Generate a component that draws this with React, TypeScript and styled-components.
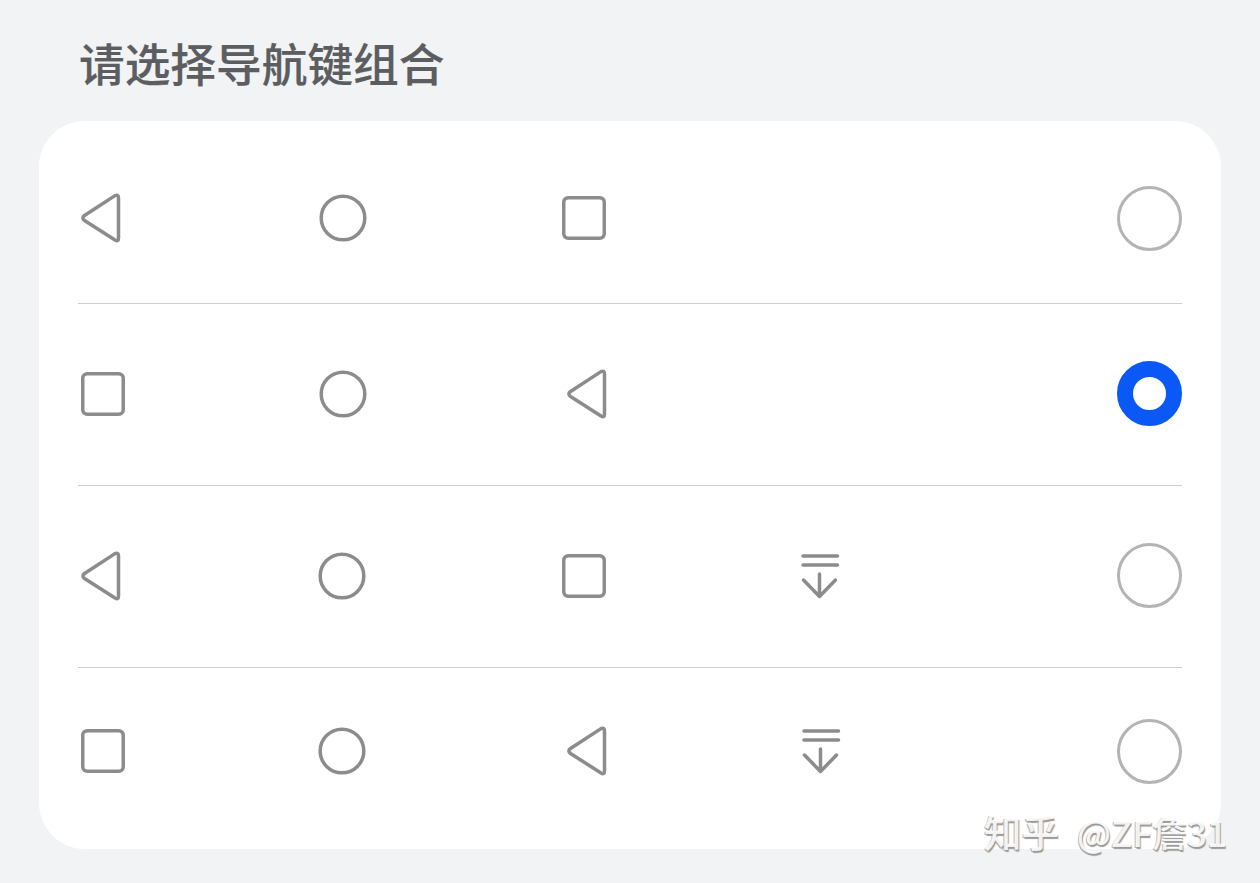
import React from "react";
import styled, { createGlobalStyle } from "styled-components";

type IconKind = "back" | "home" | "recent" | "down";
type IconSpec = { kind: IconKind; nudge: number };
type RowSpec = { icons: IconSpec[]; selected?: boolean };

const rows: RowSpec[] = [
	{
		icons: [
			{ kind: "back", nudge: 1 },
			{ kind: "home", nudge: -1.5 },
			{ kind: "recent", nudge: 0 },
		],
	},
	{
		icons: [
			{ kind: "recent", nudge: -1 },
			{ kind: "home", nudge: -1.5 },
			{ kind: "back", nudge: 7 },
		],
		selected: true,
	},
	{
		icons: [
			{ kind: "back", nudge: 1 },
			{ kind: "home", nudge: -2.5 },
			{ kind: "recent", nudge: 0 },
			{ kind: "down", nudge: 0 },
		],
	},
	{
		icons: [
			{ kind: "recent", nudge: -1 },
			{ kind: "home", nudge: -2.5 },
			{ kind: "back", nudge: 7 },
			{ kind: "down", nudge: 1 },
		],
	},
];

function NavIcon({ kind, nudge }: IconSpec) {
	return (
		<IconSvg viewBox="0 0 52 52" $nudge={nudge}>
			{kind === "back" && (
				<path d="M39.5 6V46Q39.5 50 36 48L5.5 28.5Q2.2 26 5.5 23.5L36 3.6Q39.5 2 39.5 6Z" />
			)}
			{kind === "home" && <circle cx="26" cy="26" r="21.8" />}
			{kind === "recent" && <rect x="5.75" y="5.75" width="40.5" height="40.5" rx="4.5" />}
			{kind === "down" && (
				<path d="M5 6H39.5M5 15H39.5M21.5 24V46M5.5 30L21.5 46.5L37.5 30" />
			)}
		</IconSvg>
	);
}

export default function App() {
	return (
		<Page>
			<GlobalStyle />
			<Title>请选择导航键组合</Title>
			<Card>
				{rows.map((row, i) => (
					<Row key={i} $last={i === rows.length - 1}>
						{row.icons.map((icon, j) => (
							<IconCell key={j}>
								<NavIcon {...icon} />
							</IconCell>
						))}
						<Radio $selected={row.selected} />
					</Row>
				))}
			</Card>
			<Watermark>
				<WatermarkBrand>知乎</WatermarkBrand>@ZF詹31
			</Watermark>
		</Page>
	);
}

const GlobalStyle = createGlobalStyle`
	html, body {
		margin: 0;
		padding: 0;
		background: #f1f3f5;
	}
`;

const Page = styled.div`
	position: relative;
	width: 1260px;
	height: 883px;
	padding: 0 39px;
	box-sizing: border-box;
	overflow: hidden;
	background: #f1f3f5;
	font-family: "Noto Sans CJK SC", "Noto Sans", sans-serif;
`;

const Title = styled.h1`
	margin: 0;
	height: 121px;
	padding: 29px 0 0 40px;
	box-sizing: border-box;
	font-size: 45.7px;
	line-height: 66px;
	font-weight: 500;
	color: #5c5d60;
	-webkit-text-stroke: 0.2px #5c5d60;
`;

const Card = styled.div`
	display: grid;
	grid-template-rows: 169px 182px 182px 166px;
	height: 728px;
	padding: 14px 39px 15px;
	box-sizing: border-box;
	background: #fff;
	border-radius: 46px;
`;

const Row = styled.div<{ $last?: boolean }>`
	display: flex;
	align-items: center;
	padding-bottom: ${(p) => (p.$last ? "0" : "2px")};
	border-bottom: ${(p) => (p.$last ? "none" : "1px solid #cfcfcf")};
`;

const IconCell = styled.div`
	display: flex;
	width: 240px;
	flex-shrink: 0;
`;

const IconSvg = styled.svg<{ $nudge: number }>`
	width: 52px;
	height: 52px;
	margin-left: ${(p) => p.$nudge}px;
	fill: none;
	stroke: #8c8c8c;
	stroke-width: 3.5;
	stroke-linecap: round;
	stroke-linejoin: round;
`;

const Radio = styled.div<{ $selected?: boolean }>`
	width: 65px;
	height: 65px;
	margin-left: auto;
	margin-right: 0.5px;
	box-sizing: border-box;
	border-radius: 50%;
	border: ${(p) => (p.$selected ? "16px solid #0a59f7" : "3.5px solid #b4b4b4")};
	background: #fff;
`;

const Watermark = styled.div`
	position: absolute;
	right: 33px;
	bottom: 27px;
	font-size: 35px;
	line-height: 48px;
	font-weight: 500;
	white-space: nowrap;
	color: rgba(255, 255, 255, 0.9);
	text-shadow: 1px 2px 1px #999, -1px 1px 0 #bcbcbc;
`;

const WatermarkBrand = styled.span`
	font-size: 37.5px;
	margin-right: 18px;
`;
